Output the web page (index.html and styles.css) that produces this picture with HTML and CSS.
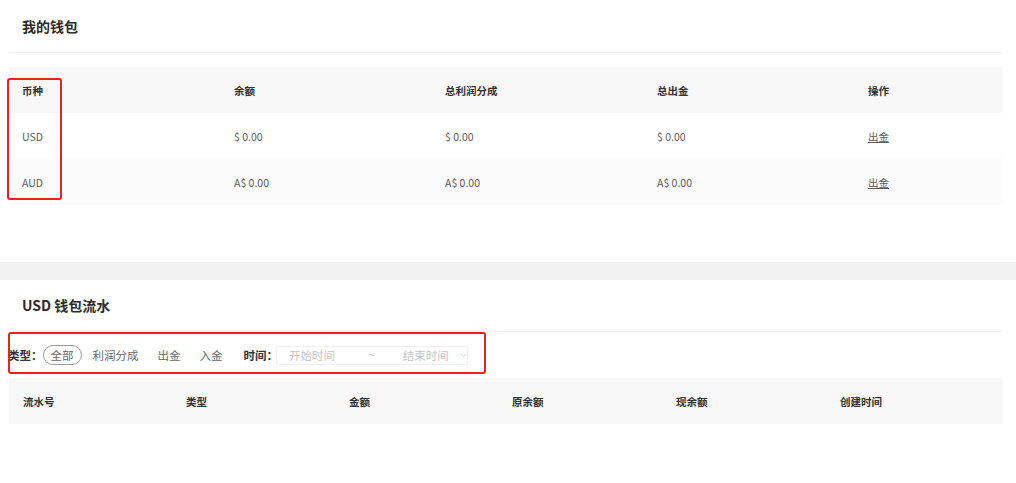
FILE: index.html
```html
<!DOCTYPE html>
<html>

<head>
    <meta charset="UTF-8">
    <link rel="stylesheet" href="styles.css">
</head>

<body>
    <div class="card wallet">
        <div class="card-head">我的钱包</div>
        <div class="table wallet-table">
            <div class="row head">
                <div>币种</div>
                <div>余额</div>
                <div>总利润分成</div>
                <div>总出金</div>
                <div>操作</div>
            </div>
            <div class="row">
                <div>USD</div>
                <div>$ 0.00</div>
                <div>$ 0.00</div>
                <div>$ 0.00</div>
                <div><span class="link">出金</span></div>
            </div>
            <div class="row alt">
                <div>AUD</div>
                <div>A$ 0.00</div>
                <div>A$ 0.00</div>
                <div>A$ 0.00</div>
                <div><span class="link">出金</span></div>
            </div>
        </div>
        <div class="mark mark-currency"></div>
    </div>

    <div class="card flow">
        <div class="card-head">USD 钱包流水</div>
        <div class="filter">
            <span class="label">类型：</span>
            <span class="opt active">全部</span>
            <span class="opt">利润分成</span>
            <span class="opt">出金</span>
            <span class="opt">入金</span>
            <span class="label time-label">时间：</span>
            <div class="range">
                <span class="ph">开始时间</span>
                <span class="sep">~</span>
                <span class="ph">结束时间</span>
                <svg class="chev" width="7" height="5" viewBox="0 0 7 5"><path d="M1 1.2 L3.5 3.6 L6 1.2" fill="none" stroke="#d0d0d0" stroke-width="1"/></svg>
            </div>
        </div>
        <div class="table flow-table">
            <div class="row head">
                <div>流水号</div>
                <div>类型</div>
                <div>金额</div>
                <div>原余额</div>
                <div>现余额</div>
                <div>创建时间</div>
            </div>
        </div>
        <div class="mark mark-filter"></div>
    </div>
</body>

</html>
```

FILE: styles.css
```css
:root {
    --text: #333;
    --muted: #5a5a5a;
    --line: #f0f0f0;
    --head-bg: #f8f8f9;
    --mark: #e8231f;
}

body {
    font-family: "Noto Sans CJK SC", "Noto Sans", sans-serif;
    background: #f2f2f2;
    margin: 0;
    color: var(--text);
}

.card {
    position: relative;
    background: #fff;
    padding: 0 13px 0 9px;
}

.wallet {
    height: 262px;
    margin-bottom: 18px;
}

.flow {
    height: 203px;
}

.card-head {
    height: 52px;
    line-height: 52px;
    padding-left: 13px;
    font-size: 14px;
    font-weight: 700;
    color: #2b2b2b;
    border-bottom: 1px solid var(--line);
}

.flow .card-head {
    height: 51px;
    line-height: 51px;
}

.table {
    font-size: 10.5px;
    color: var(--muted);
}

.wallet-table {
    margin-top: 14px;
}

.row {
    display: grid;
    height: 46px;
    align-items: center;
}

.wallet-table .row {
    grid-template-columns: 212px 211px 212px 211px 1fr;
}

.flow-table .row {
    grid-template-columns: 163px 163px 163px 164px 164px 1fr;
}

.row > div {
    padding-left: 13px;
}

.flow-table .row > div {
    padding-left: 14px;
}

.row.head {
    background: var(--head-bg);
    color: #333;
    font-weight: 700;
}

.row.alt {
    background: #fbfbfc;
}

.link {
    text-decoration: underline;
    color: var(--muted);
}

.filter {
    display: flex;
    align-items: center;
    height: 46px;
    margin-left: -1px;
    font-size: 11.5px;
    color: #666;
    white-space: nowrap;
}

.filter > * {
    flex-shrink: 0;
}

.label {
    font-weight: 700;
    color: #333;
}

.opt {
    padding: 0 7px;
    margin-right: 3px;
    height: 18px;
    line-height: 18px;
    border: 1px solid transparent;
    border-radius: 10px;
}

.opt.active {
    border-color: #9a9a9a;
}

.time-label {
    margin-left: 10px;
}

.range {
    display: flex;
    align-items: center;
    width: 192px;
    height: 19px;
    margin-left: -2px;
    border: 1px solid #f0f0f0;
    border-radius: 2px;
    padding-left: 12px;
    box-sizing: border-box;
    color: #c4c4c4;
}

.range > * {
    flex-shrink: 0;
}

.sep {
    font-family: "Liberation Sans", sans-serif;
    margin: 0 28px 0 33px;
}

.chev {
    margin-left: 11px;
}

.mark {
    position: absolute;
    border: 2px solid var(--mark);
    border-radius: 3px;
    box-sizing: border-box;
}

.mark-currency {
    left: 7px;
    top: 78px;
    width: 55px;
    height: 122px;
}

.mark-filter {
    left: 8px;
    top: 52px;
    width: 478px;
    height: 42px;
}
```
